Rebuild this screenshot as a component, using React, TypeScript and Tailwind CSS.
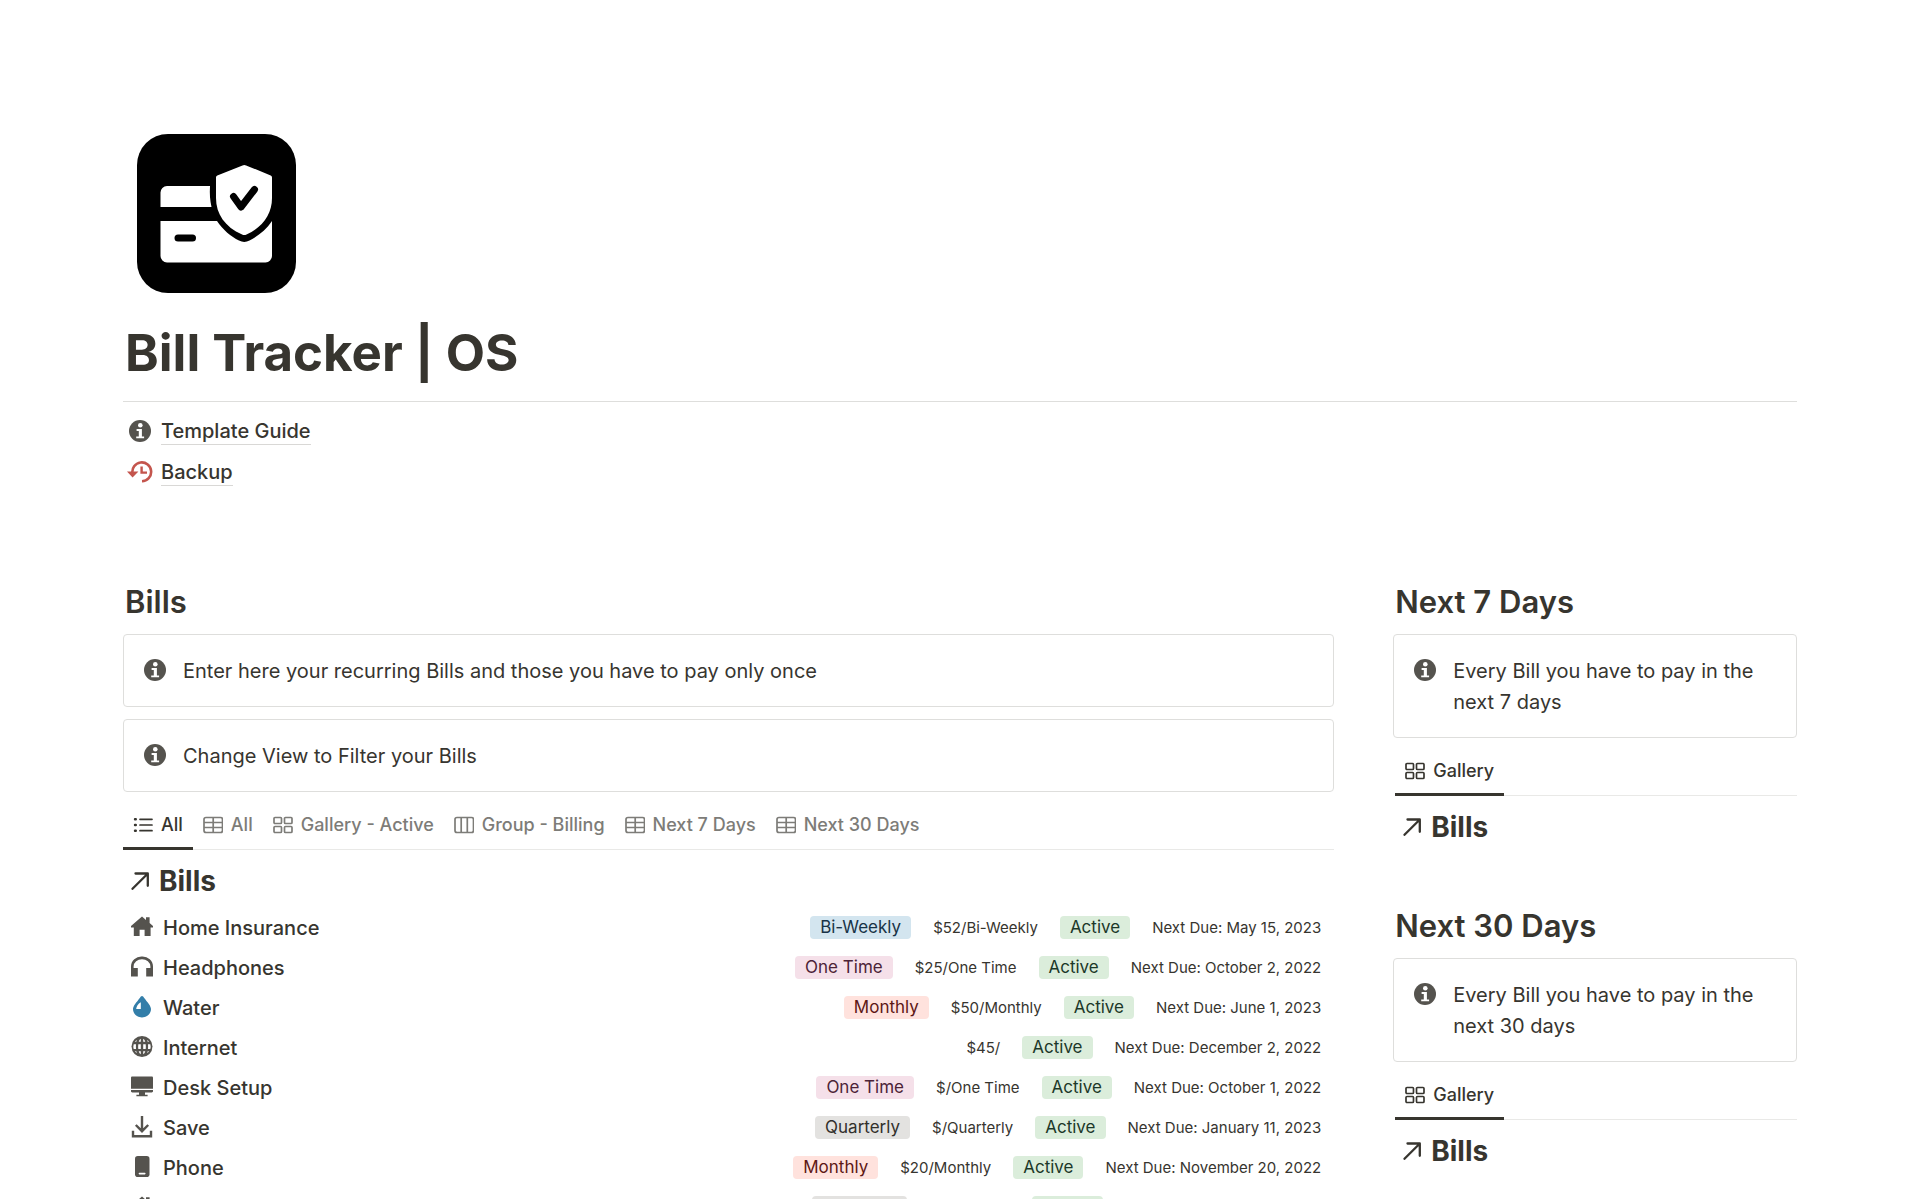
import type { ReactNode } from 'react';

type IconName = 'house' | 'headphones' | 'drop' | 'globe' | 'desktop' | 'download' | 'phone';
type TagColor = 'blue' | 'pink' | 'red' | 'gray' | 'green';
type ViewIcon = 'list' | 'table' | 'gallery' | 'board';

interface Bill {
  name: string;
  icon: IconName;
  billing?: string;
  color?: TagColor;
  price: string;
  due: string;
}

const BILLS: Bill[] = [
  { name: 'Home Insurance', icon: 'house', billing: 'Bi-Weekly', color: 'blue', price: '$52/Bi-Weekly', due: 'May 15, 2023' },
  { name: 'Headphones', icon: 'headphones', billing: 'One Time', color: 'pink', price: '$25/One Time', due: 'October 2, 2022' },
  { name: 'Water', icon: 'drop', billing: 'Monthly', color: 'red', price: '$50/Monthly', due: 'June 1, 2023' },
  { name: 'Internet', icon: 'globe', price: '$45/', due: 'December 2, 2022' },
  { name: 'Desk Setup', icon: 'desktop', billing: 'One Time', color: 'pink', price: '$/One Time', due: 'October 1, 2022' },
  { name: 'Save', icon: 'download', billing: 'Quarterly', color: 'gray', price: '$/Quarterly', due: 'January 11, 2023' },
  { name: 'Phone', icon: 'phone', billing: 'Monthly', color: 'red', price: '$20/Monthly', due: 'November 20, 2022' },
  { name: 'Rental Bill', icon: 'house', billing: 'Quarterly', color: 'gray', price: '$/Quarterly', due: 'October 12, 2022' },
];

const VIEWS: { label: string; icon: ViewIcon }[] = [
  { label: 'All', icon: 'list' },
  { label: 'All', icon: 'table' },
  { label: 'Gallery - Active', icon: 'gallery' },
  { label: 'Group - Billing', icon: 'board' },
  { label: 'Next 7 Days', icon: 'table' },
  { label: 'Next 30 Days', icon: 'table' },
];

const TAG_COLORS: Record<TagColor, string> = {
  blue: 'bg-[#d3e5ef] text-[#183347]',
  pink: 'bg-[#f5e0e9] text-[#4c2337]',
  red: 'bg-[#ffe2dd] text-[#5d1715]',
  gray: 'bg-[#e3e2e0] text-[#32302c]',
  green: 'bg-[#dbeddb] text-[#1c3829]',
};

function InfoIcon() {
  return (
    <svg viewBox="0 0 22 22" className="size-[22px] shrink-0" aria-hidden="true">
      <circle cx="11" cy="11" r="11" fill="#55534e" />
      <circle cx="11.3" cy="5.2" r="2.3" fill="#fff" />
      <path d="M7.6 9h5.3v7.4h2.2v1.9H7.2v-1.9h2.6v-5.5H7.6z" fill="#fff" />
    </svg>
  );
}

function BackupIcon() {
  return (
    <svg viewBox="0 0 26 22" className="h-[22px] w-[26px] shrink-0" fill="none" stroke="#c4554d" aria-hidden="true">
      <path d="M5.5 12.5A9.4 9.4 0 1 1 15 20.2" strokeWidth="2.6" />
      <path d="M0 10.6h11.4L5.6 16.6z" fill="#c4554d" stroke="none" />
      <path d="M14.6 5.6v6h5.4" strokeWidth="2.4" />
    </svg>
  );
}

const ICON_PATHS: Record<IconName, ReactNode> = {
  house: <path d="M11 .5 15 4V1.2h3.6v5.9L22 10v1.6h-2.4V20h-6v-6.2H8.6V20H2.8v-8.4H0V10z" />,
  headphones: (
    <path d="M0 20.5v-10A10.5 10 0 0 1 11 .5a10.5 10 0 0 1 11 10v10h-6.800v-8.400h4.200v-1.600A8.300 7.500 0 0 0 11 3.200a8.300 7.500 0 0 0-8.400 7.300v1.600h4.200v8.400z" />
  ),
  drop: (
    <>
      <path d="M11 0c.8 0 1.500.9 2.200 1.900C16.500 6.300 20 9.800 20 13c0 4.600-4 8.400-9 8.400S2 17.600 2 13c0-3.200 3.500-6.700 6.800-11.100C9.500.9 10.200 0 11 0z" />
      <path d="M9.800 6.200v6.900H5.200c0-2.700 2-5.300 4.600-6.900z" fill="#fff" />
    </>
  ),
  globe: (
    <>
      <circle cx="11" cy="10.5" r="10.5" />
      <path
        d="M9.800 2.800v3H7.700c.5-1.500 1.200-2.600 2.100-3zM12.200 2.800c.9.400 1.600 1.500 2.100 3h-2.100zM5.900 3.900 5.300 5.800H3.900c.5-.8 1.200-1.400 2-1.900zM16.100 3.900c.8.500 1.500 1.100 2 1.900h-1.400zM2.700 8.200H5l-.1 2.300.1 2.400H2.700a8 8 0 0 1 0-4.700zM7.300 8.200h2.500v4.700H7.300a20 20 0 0 1 0-4.700zM12.200 8.200h2.500a20 20 0 0 1 0 4.700h-2.500zM17 8.200h2.300a8 8 0 0 1 0 4.700H17l.1-2.400zM3.900 15.200h1.400l.6 1.900c-.8-.5-1.500-1.100-2-1.900zM7.700 15.200h2.100v3c-.9-.4-1.600-1.500-2.100-3zM12.200 15.200h2.100c-.5 1.500-1.200 2.600-2.100 3zM16.700 15.200h1.400c-.5.8-1.200 1.400-2 1.900z"
        fill="#fff"
      />
    </>
  ),
  desktop: (
    <path d="M1.300.6h19.400c.8 0 1.300.5 1.300 1.300v10.900H0V1.900C0 1.100.5.6 1.300.6zM0 13.900h22v1.400c0 .7-.5 1.200-1.300 1.200H14v2.200h2.600v1.600H5.400v-1.600H8v-2.200H1.300C.5 16.500 0 16 0 15.300z" />
  ),
  download: (
    <g fill="none" stroke="#55534e" strokeWidth="2.4">
      <path d="M11 0v15M4.800 9 11 15.200 17.200 9" />
      <path d="M2 14.800v5.400h18v-5.400" />
    </g>
  ),
  phone: (
    <>
      <rect x="4" y="0" width="14.5" height="21" rx="2.8" />
      <rect x="7.6" y="16.8" width="7" height="1.6" rx=".8" fill="#fff" />
    </>
  ),
};

function BillIcon({ name }: { name: IconName }) {
  return (
    <svg
      viewBox="0 0 22 22"
      className="size-[22px] shrink-0"
      fill={name === 'drop' ? '#337ea9' : '#55534e'}
      aria-hidden="true"
    >
      {ICON_PATHS[name]}
    </svg>
  );
}

const VIEW_PATHS: Record<ViewIcon, ReactNode> = {
  list: (
    <>
      <path d="M7 3.3H19M7 9H19M7 14.7H19" strokeLinecap="round" />
      <path d="M2 3.3h.8M2 9h.8M2 14.7h.8" strokeWidth="2.4" strokeLinecap="round" />
    </>
  ),
  table: (
    <>
      <rect x="1" y="1.5" width="18.5" height="15" rx="2" />
      <path d="M1 6.5h18.5M1 11.5h18.5M10.2 1.5v15" />
    </>
  ),
  gallery: (
    <>
      <rect x="1" y="1.5" width="7.5" height="6" rx="1" />
      <rect x="11.5" y="1.5" width="7.5" height="6" rx="1" />
      <rect x="1" y="10.5" width="7.5" height="6" rx="1" />
      <rect x="11.5" y="10.5" width="7.5" height="6" rx="1" />
    </>
  ),
  board: (
    <>
      <rect x="1" y="1.5" width="18.5" height="15" rx="2" />
      <path d="M7.2 1.5v15M13.3 1.5v15" />
    </>
  ),
};

function ViewTab({ label, icon, active = false }: { label: string; icon: ViewIcon; active?: boolean }) {
  return (
    <button
      type="button"
      role="tab"
      aria-selected={active}
      className={`-mb-px flex h-[47px] items-start gap-2 border-b-3 px-2.5 pt-2 text-[18px] leading-7 font-medium ${
        active ? 'border-[#37352f] text-[#37352f]' : 'border-transparent text-[#7d7c78]'
      }`}
    >
      <svg viewBox="0 0 20 18" className="mt-[5px] h-[18px] w-5 shrink-0" fill="none" stroke="currentColor" strokeWidth="1.7" aria-hidden="true">
        {VIEW_PATHS[icon]}
      </svg>
      <span>{label}</span>
    </button>
  );
}

function Callout({ children }: { children: ReactNode }) {
  return (
    <div className="flex gap-[17px] rounded-[4px] border border-[#dededc] px-5 pt-[21px] pb-[19px]">
      <div className="pt-[3px]">
        <InfoIcon />
      </div>
      <p className="text-[20px] leading-[31px]">{children}</p>
    </div>
  );
}

function LinkedTitle() {
  return (
    <a href="#bills" className="flex items-center gap-2.5 px-2 text-[28px] leading-9 font-bold">
      <svg viewBox="0 0 18 18" className="size-[18px]" fill="none" stroke="currentColor" strokeWidth="2.3" strokeLinecap="round" strokeLinejoin="round" aria-hidden="true">
        <path d="M1.5 16.8 16.6 1.7M4.5 1.5h12.3v12.3" />
      </svg>
      Bills
    </a>
  );
}

function Tag({ color, children }: { color: TagColor; children: ReactNode }) {
  return (
    <span className={`rounded-[4px] px-2.5 text-[17px] leading-[23px] ${TAG_COLORS[color]}`}>{children}</span>
  );
}

function BillRow({ bill }: { bill: Bill }) {
  return (
    <li className="flex h-10 items-center justify-between pr-[13px] pl-2">
      <a href="#bill" className="flex items-center gap-2.5 text-[20px] leading-7 font-medium">
        <BillIcon name={bill.icon} />
        <span className="pt-0.5">{bill.name}</span>
      </a>
      <div className="flex items-center gap-[22px] text-[15px] leading-[23px]">
        {bill.billing && bill.color && <Tag color={bill.color}>{bill.billing}</Tag>}
        <span>{bill.price}</span>
        <Tag color="green">Active</Tag>
        <span>Next Due: {bill.due}</span>
      </div>
    </li>
  );
}

function Upcoming({ title, note }: { title: string; note: string }) {
  return (
    <section>
      <h2 className="px-0.5 text-[31px] leading-9 font-semibold">{title}</h2>
      <div className="mt-3.5">
        <Callout>{note}</Callout>
      </div>
      <div className="mt-[11px] ml-0.5">
        <div role="tablist" className="flex border-b border-[#e9e9e7]">
          <ViewTab label="Gallery" icon="gallery" active />
        </div>
        <div className="mt-[13px]">
          <LinkedTitle />
        </div>
      </div>
    </section>
  );
}

function CoverIcon() {
  return (
    <svg viewBox="0 0 159 159" className="size-[159px]" aria-hidden="true">
      <rect width="159" height="159" rx="31" fill="#000" />
      <path d="M30 52h43c-.5 8 0 14 1.5 21H23.5V58.5A6.5 6.5 0 0 1 30 52z" fill="#fff" />
      <path d="M23.5 87H80c6 9 14 15.5 22 19.6 3.5 1.8 7 1.8 10.5 0C121 102 129 96 135 87v35a6.5 6.5 0 0 1-6.5 6.5H30a6.5 6.5 0 0 1-6.5-6.5z" fill="#fff" />
      <path d="M105.5 31.4q1.8-.8 3.6 0l24.6 10q1.3.6 1.3 2V64c0 16-9 29-25.5 36.5q-2.2 1-4.4 0C88 93 79 80 79 64V43.400q0-1.400 1.300-2z" fill="#fff" />
      <path d="m96.5 62.5 7.5 10.5 13.5-17.5" fill="none" stroke="#000" strokeWidth="7" strokeLinecap="round" strokeLinejoin="round" />
      <path d="M41 104h14.5" stroke="#000" strokeWidth="7" strokeLinecap="round" />
    </svg>
  );
}

export default function App() {
  return (
    <main className="h-screen overflow-hidden bg-white px-[123px] pt-[134px] font-['Inter',sans-serif] text-[#37352f]">
      <header>
        <div className="pl-3.5">
          <CoverIcon />
        </div>
        <h1 className="mt-[29px] px-0.5 text-[51px] leading-[62px] font-bold">Bill Tracker | OS</h1>
        <hr className="mt-[17px] border-[#dededc]" />
      </header>

      <nav className="mt-[15px] flex flex-col items-start gap-[13px] pl-1 text-[20px] font-medium">
        <a href="#guide" className="flex items-center gap-2">
          <span className="flex w-[26px] justify-center">
            <InfoIcon />
          </span>
          <span className="border-b border-[#d9d8d6] pt-0.5 leading-[25px]">Template Guide</span>
        </a>
        <a href="#backup" className="flex items-center gap-2">
          <BackupIcon />
          <span className="border-b border-[#d9d8d6] pt-0.5 leading-[25px]">Backup</span>
        </a>
      </nav>

      <div className="mt-[98px] grid grid-cols-[3fr_1fr] gap-[59px]">
        <section>
          <h2 className="px-0.5 text-[31px] leading-9 font-semibold">Bills</h2>
          <div className="mt-3.5 flex flex-col gap-3">
            <Callout>Enter here your recurring Bills and those you have to pay only once</Callout>
            <Callout>Change View to Filter your Bills</Callout>
          </div>
          <div role="tablist" className="mt-[11px] flex border-b border-[#e9e9e7]">
            {VIEWS.map((view, index) => (
              <ViewTab key={index} label={view.label} icon={view.icon} active={index === 0} />
            ))}
          </div>
          <div className="mt-[13px]">
            <LinkedTitle />
          </div>
          <ul className="mt-2">
            {BILLS.map((bill) => (
              <BillRow key={bill.name} bill={bill} />
            ))}
          </ul>
        </section>

        <aside className="flex flex-col gap-[63px]">
          <Upcoming title="Next 7 Days" note="Every Bill you have to pay in the next 7 days" />
          <Upcoming title="Next 30 Days" note="Every Bill you have to pay in the next 30 days" />
        </aside>
      </div>
    </main>
  );
}
